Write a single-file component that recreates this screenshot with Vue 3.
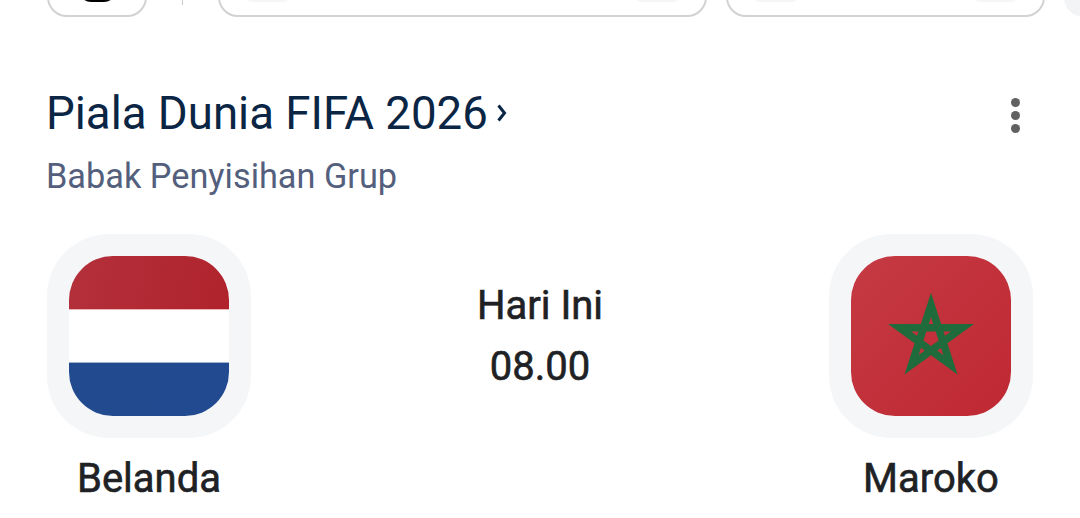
<template>
  <div class="page">
    <div class="chips">
      <div class="chip chip-logo"><span class="logo-bit"></span></div>
      <span class="sep"></span>
      <div class="chip chip-wide"><span class="ghost"></span><span class="ghost"></span></div>
      <div class="chip chip-mid"><span class="ghost"></span><span class="ghost"></span></div>
      <div class="chip-next"></div>
    </div>

    <div class="head">
      <div class="head-text">
        <div class="title-row">
          <h2 class="title">Piala Dunia FIFA 2026</h2>
          <svg class="chev" width="10" height="18" viewBox="0 0 10 18">
            <path d="M1.5 1.5 L7.5 9 L1.5 16.5" fill="none" stroke="#0b2545" stroke-width="3" />
          </svg>
        </div>
        <div class="subtitle">Babak Penyisihan Grup</div>
      </div>
      <div class="more">
        <span class="dot"></span>
        <span class="dot"></span>
        <span class="dot"></span>
      </div>
    </div>

    <div class="match">
      <div class="team">
        <div class="flag-box">
          <div class="flag flag-nl">
            <div class="stripe red"></div>
            <div class="stripe white"></div>
            <div class="stripe blue"></div>
          </div>
        </div>
        <div class="team-name">Belanda</div>
      </div>

      <div class="info">
        <div class="day">Hari Ini</div>
        <div class="time">08.00</div>
      </div>

      <div class="team">
        <div class="flag-box">
          <div class="flag flag-ma">
            <svg class="star" width="86" height="84" viewBox="0 0 86 84">
              <path
                d="M43 12 L62.4 71.7 L11.6 34.8 L74.4 34.8 L23.6 71.7 Z"
                fill="none"
                stroke="#1f6b3c"
                stroke-width="7.5"
                stroke-linejoin="miter"
              />
            </svg>
          </div>
        </div>
        <div class="team-name">Maroko</div>
      </div>
    </div>
  </div>
</template>

<script setup>
</script>

<style>
html,
body {
  margin: 0;
  background: #fff;
  overflow: hidden;
}
</style>

<style scoped>
.page {
  width: 1080px;
  height: 518px;
  overflow: hidden;
  background: #fff;
  font-family: Roboto, "Liberation Sans", sans-serif;
}

.chips {
  display: flex;
  align-items: flex-end;
  height: 17px;
  padding-left: 47px;
}

.chip {
  flex: none;
  height: 40px;
  box-sizing: border-box;
  border: 2px solid #d2d2d2;
  border-radius: 24px;
  display: flex;
  align-items: flex-start;
  justify-content: space-between;
  padding: 0 24px;
}

.chip-logo {
  width: 100px;
  justify-content: center;
}

.logo-bit {
  width: 37px;
  height: 23px;
  flex: none;
  background: #000;
  border-radius: 0 0 12px 12px;
}

.sep {
  flex: none;
  width: 1px;
  height: 6px;
  margin: 0 35px 12px 35px;
  background: #c8c8c8;
  align-self: flex-end;
}

.chip-wide {
  width: 489px;
  margin-right: 19px;
}

.chip-mid {
  width: 319px;
  margin-right: 19px;
}

.ghost {
  width: 47px;
  height: 23px;
  background: #f6f6f7;
  border-radius: 8px;
}

.chip-next {
  flex: none;
  width: 60px;
  height: 40px;
  border-radius: 22px;
  background: #f3f4f6;
}

.head {
  display: flex;
  justify-content: space-between;
  padding: 69px 60px 0 46px;
}

.title-row {
  display: flex;
  align-items: center;
  gap: 9px;
  height: 54px;
}

.title {
  margin: 0;
  font-size: 45.6px;
  font-weight: 400;
  color: #0b2545;
}

.subtitle {
  margin-top: 17px;
  font-size: 34.3px;
  line-height: 38px;
  color: #545f7d;
}

.more {
  display: flex;
  flex-direction: column;
  gap: 4px;
  padding-top: 12px;
}

.dot {
  width: 9px;
  height: 9px;
  border-radius: 50%;
  background: #616161;
}

.match {
  display: flex;
  justify-content: space-between;
  padding: 39px 47px 0 47px;
}

.team {
  width: 204px;
  display: flex;
  flex-direction: column;
  align-items: center;
}

.flag-box {
  width: 204px;
  height: 204px;
  box-sizing: border-box;
  padding: 22px;
  border-radius: 62px;
  background: #f5f6f8;
}

.flag {
  width: 160px;
  height: 160px;
  border-radius: 44px;
  overflow: hidden;
}

.stripe.red {
  height: 54px;
  box-sizing: border-box;
  background: linear-gradient(100deg, #b3303b, #b0232c);
  border-bottom: 1px solid #ecb4b8;
}

.stripe.white {
  height: 52px;
  background: #fff;
}

.stripe.blue {
  height: 54px;
  box-sizing: border-box;
  background: linear-gradient(100deg, #214a8f, #224a90);
  border-top: 1px solid #9db1d0;
}

.flag-ma {
  background: linear-gradient(135deg, #c53a43, #bf2832);
  display: flex;
  align-items: center;
  justify-content: center;
}

.star {
  margin-top: -2px;
}

.team-name {
  margin-top: 19px;
  font-size: 40px;
  line-height: 44px;
  color: #202124;
  -webkit-text-stroke: 0.6px #202124;
}

.info {
  display: flex;
  flex-direction: column;
  align-items: center;
  padding-top: 47px;
  color: #202124;
  -webkit-text-stroke: 0.6px #202124;
}

.day {
  font-size: 40px;
  line-height: 50px;
}

.time {
  margin-top: 11px;
  font-size: 40px;
  line-height: 50px;
}
</style>
